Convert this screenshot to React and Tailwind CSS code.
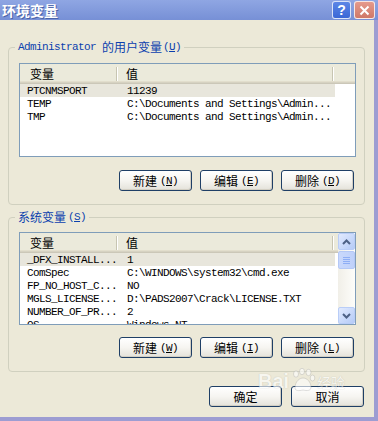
const MONO = "font-['Liberation_Mono','Noto_Sans_CJK_SC',monospace] text-[11px] tracking-[-0.6px]";
const CJK = "font-['Noto_Sans_CJK_SC',sans-serif]";

function Btn({ label, mk }) {
  return (
    <button className="w-[73px] h-[21px] rounded-[3px] border border-[#1f3f66] bg-linear-to-b from-white via-[#f6f5f1] to-[#e4e2da] shadow-[inset_-1px_-1px_0_#d3cfc3] flex items-center justify-center text-black">
      <span className={CJK + " text-[12px] leading-[14px]"}>{label}</span>
      {mk && (
        <span className={MONO + " ml-[3px] leading-[14px]"}>
          (<u>{mk}</u>)
        </span>
      )}
    </button>
  );
}

function Header() {
  return (
    <div className="h-[20px] shrink-0 flex items-center bg-[#ebeadb] shadow-[inset_0_-1px_0_#cbc7b8,inset_0_-2px_0_#d6d2c2,inset_0_-3px_0_#e2decd]">
      <div className={CJK + " w-[96px] pl-[10px] text-[12px] text-black"}>变量</div>
      <div className="w-[2px] h-[14px] border-l border-[#c7c5b2] border-r border-r-white" />
      <div className={CJK + " w-[214px] pl-[8px] text-[12px] text-black"}>值</div>
      <div className="w-[2px] h-[14px] border-l border-[#c7c5b2] border-r border-r-white" />
    </div>
  );
}

function Row({ name, value, sel }) {
  return (
    <div className={"h-[13px] w-[315px] shrink-0 flex items-end " + (sel ? "bg-[#e8e6dc]" : "")}>
      <div className={MONO + " w-[98px] pl-[7px] leading-[12px] text-black whitespace-nowrap"}>{name}</div>
      <div className={MONO + " pl-[9px] leading-[12px] text-black whitespace-nowrap"}>{value}</div>
    </div>
  );
}

function Chevron({ up }) {
  return (
    <svg width="9" height="6" viewBox="0 0 9 6">
      <path
        d={up ? "M1 5 L4.5 1.5 L8 5" : "M1 1 L4.5 4.5 L8 1"}
        fill="none"
        stroke="#4d6185"
        strokeWidth="2"
      />
    </svg>
  );
}

function ScrollBtn({ up }) {
  return (
    <div className="h-[17px] w-[17px] rounded-[2px] border border-[#b9cdf7] bg-linear-to-br from-[#e1eafe] to-[#b5cbf7] flex items-center justify-center">
      <Chevron up={up} />
    </div>
  );
}

function Scrollbar() {
  return (
    <div className="w-[17px] shrink-0 flex flex-col bg-linear-to-r from-[#f1efe8] to-[#fdfdfa]">
      <ScrollBtn up />
      <div className="mt-[1px] h-[18px] w-[17px] rounded-[2px] border border-[#b4c8f6] bg-linear-to-r from-[#c9d8fc] to-[#bfd1fa] flex flex-col items-center justify-center gap-[1px]">
        <div className="w-[7px] h-[1px] bg-[#8eaef5]" />
        <div className="w-[7px] h-[1px] bg-[#8eaef5]" />
        <div className="w-[7px] h-[1px] bg-[#8eaef5]" />
        <div className="w-[7px] h-[1px] bg-[#8eaef5]" />
      </div>
      <div className="flex-1" />
      <ScrollBtn />
    </div>
  );
}

function ListView({ rows, scroll, h }) {
  return (
    <div className={"w-[337px] border border-[#7f9db9] bg-white flex overflow-hidden " + h}>
      <div className="flex-1 flex flex-col min-w-0 overflow-hidden">
        <Header />
        {rows.map((r, i) => (
          <Row key={i} name={r[0]} value={r[1]} sel={i === 0} />
        ))}
      </div>
      {scroll && <Scrollbar />}
    </div>
  );
}

function Group({ legend, children, className }) {
  return (
    <fieldset className={"w-[357px] border border-[#d0d0bf] rounded-[4px] px-0 " + className}>
      <legend className="ml-[6px] px-[3px] h-[14px] leading-[14px] text-[#0b3fae] flex items-center whitespace-nowrap">
        {legend}
      </legend>
      {children}
    </fieldset>
  );
}

const userRows = [
  ["PTCNMSPORT", "11239"],
  ["TEMP", "C:\\Documents and Settings\\Admin..."],
  ["TMP", "C:\\Documents and Settings\\Admin..."],
];

const sysRows = [
  ["_DFX_INSTALL...", "1"],
  ["ComSpec", "C:\\WINDOWS\\system32\\cmd.exe"],
  ["FP_NO_HOST_C...", "NO"],
  ["MGLS_LICENSE...", "D:\\PADS2007\\Crack\\LICENSE.TXT"],
  ["NUMBER_OF_PR...", "2"],
  ["OS", "Windows_NT"],
];

export default function App() {
  return (
    <div className="relative w-[378px] h-[421px] flex flex-col bg-[#ece9d8] overflow-hidden">
      {/* title bar */}
      <div className="h-[20px] shrink-0 flex items-center justify-between bg-linear-to-b from-[#8fa6e3] to-[#7790d6]">
        <span className={CJK + " ml-[2px] text-[14px] font-bold text-white leading-[18px] [text-shadow:1px_1px_0_#4a63a8]"}>
          环境变量
        </span>
        <div className="flex items-center gap-[3px] mr-[3px]">
          <div className="w-[19px] h-[18px] rounded-[3px] border border-white/80 bg-linear-to-b from-[#5c86e6] to-[#3a67d6] flex items-center justify-center text-white font-bold text-[14px] leading-none font-['Liberation_Sans',sans-serif]">
            ?
          </div>
          <div className="w-[21px] h-[18px] rounded-[3px] border border-white/80 bg-linear-to-b from-[#e59a8c] to-[#cf7868] flex items-center justify-center">
            <svg width="11" height="11" viewBox="0 0 11 11">
              <path d="M1.5 1.5 L9.5 9.5 M9.5 1.5 L1.5 9.5" stroke="white" strokeWidth="2" />
            </svg>
          </div>
        </div>
      </div>

      <div className="flex-1 flex">
        <div className="flex-1 flex flex-col pl-[8px] pt-[20px]">
          <Group
            className="pb-[13px]"
            legend={
              <>
                <span className={MONO + " text-[#0b3fae]"}>Administrator</span>
                <span className={CJK + " ml-[6px] text-[12px]"}>的用户变量</span>
                <span className={MONO + " ml-[1px] text-[#0b3fae]"}>
                  (<u>U</u>)
                </span>
              </>
            }
          >
            <div className="pl-[10px] mt-[9px] flex flex-col">
              <ListView rows={userRows} h="h-[94px]" />
              <div className="mt-[13px] w-[337px] pr-[2px] flex justify-end gap-[8px]">
                <Btn label="新建" mk="N" />
                <Btn label="编辑" mk="E" />
                <Btn label="删除" mk="D" />
              </div>
            </div>
          </Group>

          <Group
            className="mt-[5px] pb-[13px]"
            legend={
              <>
                <span className={CJK + " text-[12px]"}>系统变量</span>
                <span className={MONO + " ml-[2px] text-[#0b3fae]"}>
                  (<u>S</u>)
                </span>
              </>
            }
          >
            <div className="pl-[10px] mt-[8px] flex flex-col">
              <ListView rows={sysRows} scroll h="h-[93px]" />
              <div className="mt-[12px] w-[337px] pr-[2px] flex justify-end gap-[8px]">
                <Btn label="新建" mk="W" />
                <Btn label="编辑" mk="I" />
                <Btn label="删除" mk="L" />
              </div>
            </div>
          </Group>

          <div className="mt-[14px] w-[357px] pr-[1px] flex justify-end gap-[9px]">
            <Btn label="确定" />
            <Btn label="取消" />
          </div>
        </div>
        <div className="w-[4px] shrink-0 bg-[#9d9dd2]" />
      </div>
      <div className="h-[4px] shrink-0 bg-[#9d9dd2]" />

      {/* watermark */}
      <div className="absolute left-[258px] top-[368px] flex items-end opacity-60 pointer-events-none">
        <span className="font-['Liberation_Sans',sans-serif] font-bold text-[20px] leading-[22px] text-white [text-shadow:0_0_1px_#9a9a9a]">
          Bai
        </span>
        <svg width="26" height="24" viewBox="0 0 26 24" className="mx-[1px]">
          <ellipse cx="6" cy="6" rx="2.5" ry="3.2" fill="white" stroke="#a8a8a8" strokeWidth="0.6" />
          <ellipse cx="12" cy="3.5" rx="2.5" ry="3.2" fill="white" stroke="#a8a8a8" strokeWidth="0.6" />
          <ellipse cx="18.5" cy="4.5" rx="2.5" ry="3.2" fill="white" stroke="#a8a8a8" strokeWidth="0.6" />
          <ellipse cx="22.5" cy="10" rx="2.3" ry="3" fill="white" stroke="#a8a8a8" strokeWidth="0.6" />
          <path d="M5 20 C5 13 10 10 13 10 C17 10 21 14 21 19 C21 23 17 23 13 22 C9 23 5 23 5 20 Z" fill="white" stroke="#a8a8a8" strokeWidth="0.6" />
        </svg>
        <span className={CJK + " text-[14px] leading-[20px] text-white [text-shadow:0_0_1px_#9a9a9a]"}>经验</span>
      </div>
    </div>
  );
}
